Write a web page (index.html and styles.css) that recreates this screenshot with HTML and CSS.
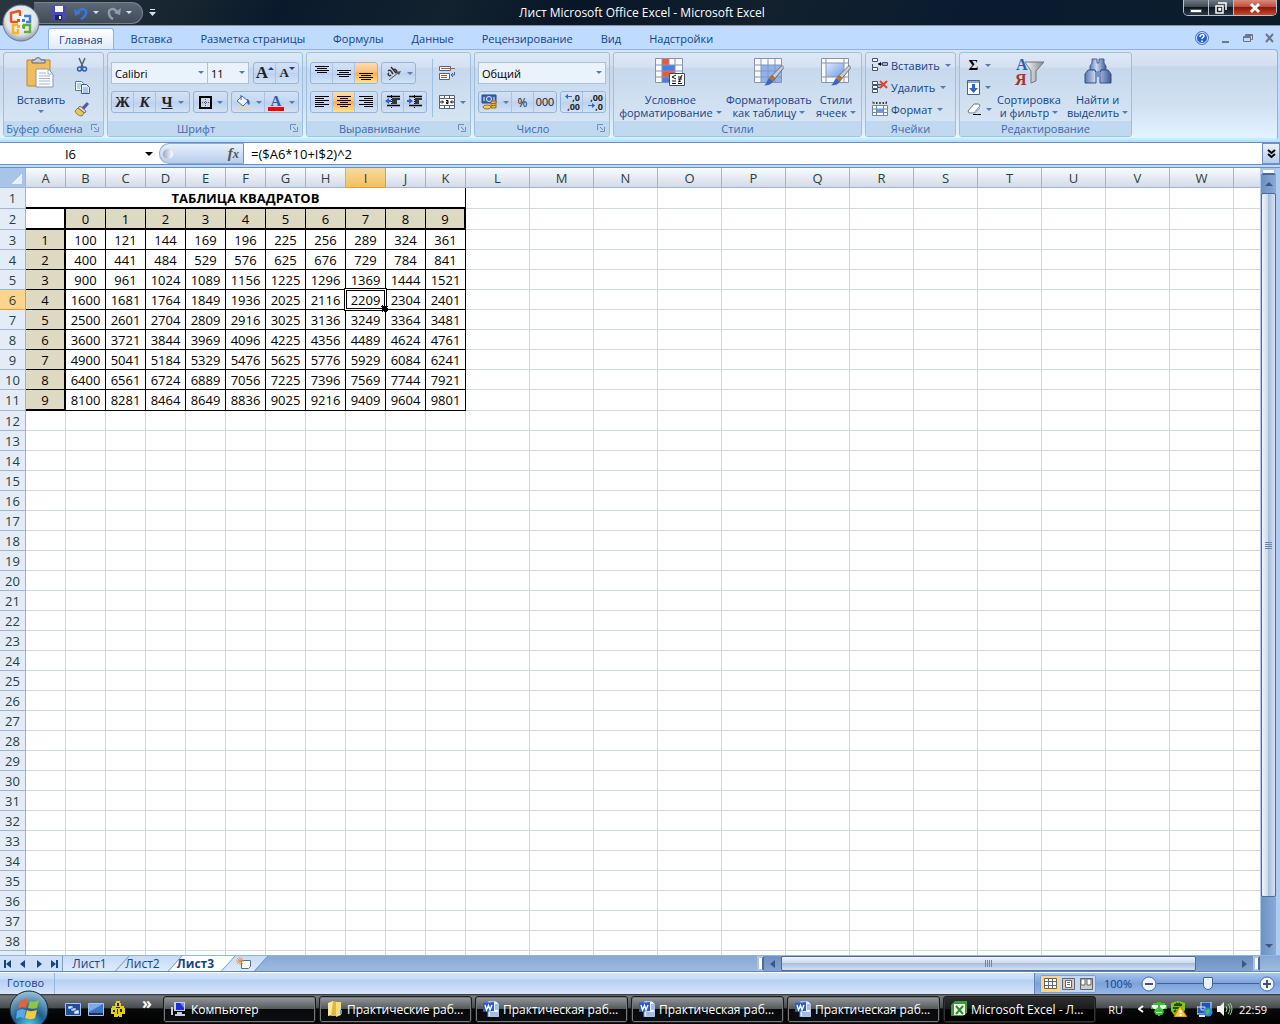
FILE: index.html
```
<!DOCTYPE html>
<html lang="ru">
<head>
  <meta charset="UTF-8">
  <meta name="viewport" content="width=device-width, initial-scale=1.0">
  <title>Лист Microsoft Office Excel - Microsoft Excel</title>
  <link rel="stylesheet" href="styles.css">
</head>
<body>
  <svg class="defs" width="0" height="0" aria-hidden="true">
    <defs>
      <linearGradient id="gBlue" x1="0" y1="0" x2="1" y2="1"><stop offset="0" stop-color="#dfeaff"/><stop offset="1" stop-color="#6e98e8"/></linearGradient>
      <linearGradient id="gGrey" x1="0" y1="0" x2="1" y2="0"><stop offset="0" stop-color="#fafafa"/><stop offset="1" stop-color="#808890"/></linearGradient>
      <linearGradient id="gBin" x1="0" y1="0" x2="1" y2="0"><stop offset="0" stop-color="#5b78ae"/><stop offset=".4" stop-color="#c9d9f4"/><stop offset="1" stop-color="#3c5a94"/></linearGradient>
      <radialGradient id="gOrb" cx=".5" cy=".9" r=".9"><stop offset="0" stop-color="#4fd0f0"/><stop offset=".45" stop-color="#1c5f8e"/><stop offset="1" stop-color="#9ec4d8"/></radialGradient>
      <radialGradient id="gOffice" cx=".5" cy=".4" r=".6"><stop offset="0" stop-color="#ffffff"/><stop offset=".7" stop-color="#dfe3ea"/><stop offset="1" stop-color="#8d98aa"/></radialGradient>
      <symbol id="word" viewBox="0 0 16 16">
        <path d="M5 0h8l3 3v13H5z" fill="#eaf2ff" stroke="#6f93cc"/>
        <path d="M12 4h3M12 6h3M12 8h3M7 12h8M7 14h8" stroke="#5c87cf"/>
        <path d="M0 2l11-1v9L0 11z" fill="#2a5bd0"/>
        <path d="M2 4l1.500 5L5.500 4.500 7 9l2-5" fill="none" stroke="#fff" stroke-width="1.400"/>
      </symbol>
      <symbol id="brush" viewBox="0 0 20 20">
        <path d="M18 0l2 2-9 11-3-3z" fill="#c9ccd3" stroke="#555a66" stroke-width=".8"/>
        <path d="M8 10l3 3-2 3-4-3z" fill="#b9772c" stroke="#7d4d16" stroke-width=".6"/>
        <path d="M5 13l4 3c-2 3-5 4-9 4 2-1 3-5 5-7z" fill="#3769c4"/>
      </symbol>
      <symbol id="launch" viewBox="0 0 8 8">
        <path d="M.5 6V.5H6" fill="none" stroke="#6f8fbb"/><path d="M3 3l3 3M7.500 3v4.500H3" fill="none" stroke="#6f8fbb"/>
      </symbol>
    </defs>
  </svg>

  <header class="titlebar">
    <div class="qat">
      <button class="ico" title="Сохранить"><svg width="14" height="14"><path d="M0 0h14v14H2l-2-2z" fill="#4a48b8"/><path d="M3 0h8v6H3z" fill="#f3f6ff"/><path d="M3 9h7v5H3z" fill="#23226e"/><path d="M7 10h2v3H7z" fill="#fff"/></svg></button>
      <button class="ico undo" title="Отменить"><svg width="14" height="14"><path d="M4 6C7 1 13 3 12 7c0 3-3 5-5 6" fill="none" stroke="#3a76dc" stroke-width="2.500"/><path d="M0 3l1 7 6-3z" fill="#3a76dc"/></svg><i class="tri light"></i></button>
      <button class="ico undo" title="Вернуть"><svg width="14" height="14"><path d="M10 6C7 1 1 3 2 7c0 3 2 5 4 6" fill="none" stroke="#8f9bab" stroke-width="2.500"/><path d="M14 2l-1 7-6-2z" fill="#8f9bab"/></svg><i class="tri light"></i></button>
    </div>
    <button class="qat-more" title="Настройка"><svg width="7" height="7"><path d="M1 .5h5" stroke="#d5e2f2"/><path d="M0 3h7L3.500 7z" fill="#d5e2f2"/></svg></button>
    <h1 class="caption">Лист Microsoft Office Excel - Microsoft Excel</h1>
    <div class="winctl">
      <button title="Свернуть"><svg width="12" height="12"><path d="M.5 7.500h11v3H.5z" fill="#fff" stroke="#555"/></svg></button>
      <button title="Развернуть"><svg width="12" height="12"><path d="M3 1h8v7M1 4h7v7H1zM4 6.500h1.500V8H4z" fill="none" stroke="#fff" stroke-width="1.500"/></svg></button>
      <button class="shut" title="Закрыть"><svg width="12" height="12"><path d="M2 2l8 8M10 2l-8 8" stroke="#fff" stroke-width="3"/></svg></button>
    </div>
  </header>
  <button class="office" title="Office"><svg width="38" height="38" viewBox="0 0 38 38">
    <circle cx="19" cy="19" r="18" fill="url(#gOffice)" stroke="#6f7c92"/>
    <g fill="none" stroke-width="2.500"><path d="M16 18h-6a1 1 0 0 1-1-1V9l8-2a1 1 0 0 1 1 1v4" stroke="#e2571c"/><path d="M22 12h6v6h-4" stroke="#3f7fd6"/><path d="M16 21h-5v8h5v-4" stroke="#f5b61f"/><path d="M22 28h6v-7h-6v4" stroke="#5fae3c"/></g>
    <path d="M15 15h3v3h-3z" fill="#e2571c"/><path d="M20 15h3v3h-3z" fill="#3f7fd6"/><path d="M15 21h3v3h-3z" fill="#f5b61f"/><path d="M20 21h3v3h-3z" fill="#5fae3c"/>
  </svg></button>

  <nav class="tabs">
    <button class="tab active">Главная</button>
    <button class="tab">Вставка</button>
    <button class="tab">Разметка страницы</button>
    <button class="tab">Формулы</button>
    <button class="tab">Данные</button>
    <button class="tab">Рецензирование</button>
    <button class="tab">Вид</button>
    <button class="tab">Надстройки</button>
    <div class="doc-ctl">
      <button title="Справка"><svg width="14" height="14"><circle cx="7" cy="7" r="6.500" fill="#2a5fd0" stroke="#5b7fb8"/><circle cx="7" cy="7" r="5.500" fill="none" stroke="#dbe8ff"/><path d="M5 6c0-3 4-3 4-1 0 1.500-2 1.500-2 3M7 9.500V11" fill="none" stroke="#fff" stroke-width="1.500"/></svg></button>
      <button title="Свернуть окно"><svg width="10" height="10"><path d="M1 8h7v2H1z" fill="#6d7784"/></svg></button>
      <button title="Восстановить окно"><svg width="10" height="10"><path d="M2.500 3V1.500h7v5H8M.5 3.500h7v5h-7zM1 4.500h6M3 2.500h6" fill="none" stroke="#6d7784"/></svg></button>
      <button title="Закрыть окно"><svg width="10" height="10"><path d="M1 1l7 8M8 1L1 9" stroke="#6d7784" stroke-width="2"/></svg></button>
    </div>
  </nav>

  <main class="ribbon">
    <section class="group g-clip">
      <div class="body">
        <button class="big"><svg width="32" height="32"><path d="M2 3h23v26H2z" fill="#f0bd5a" stroke="#b98736"/><path d="M7 6V3h3c0-3 6-3 6 0h4v3z" fill="#c9cdd6" stroke="#5f6675"/><path d="M11 12h12l5 5v13H11z" fill="#fff" stroke="#8797b0"/><path d="M23 12v5h5M14 16h7M14 19h11M14 21.500h11M14 24h11M14 27h11" fill="none" stroke="#9db2d2"/></svg><span>Вставить</span><i class="tri"></i></button>
        <div class="stack">
          <button class="ico" title="Вырезать"><svg width="16" height="16"><path d="M5 1l4 9M11 1L7 10" stroke="#56606e" stroke-width="1.500"/><circle cx="5.500" cy="12" r="2" fill="none" stroke="#2b5fb8" stroke-width="1.500"/><circle cx="10.500" cy="12" r="2" fill="none" stroke="#2b5fb8" stroke-width="1.500"/></svg></button>
          <button class="ico" title="Копировать"><svg width="16" height="16"><path d="M1.500 2.500h6l2 2v7h-8z" fill="#fff" stroke="#4c78c0"/><path d="M3 5h4M3 7h4M3 9h3" stroke="#7aa0e0"/><path d="M7.500 5.500h5l3 3v6h-8z" fill="#e9f1ff" stroke="#2f5ca8"/><path d="M9 9h5M9 11h5M9 13h5" stroke="#6e98e8"/></svg></button>
          <button class="ico" title="Формат по образцу"><svg width="16" height="16"><path d="M13 1l2 2-5 6-3-2z" fill="#5a5aa8"/><path d="M6 5l6 5-1 2-7-5z" fill="#d8dbe2" stroke="#777"/><path d="M4 7l6 5-2 3c-3 0-6-2-7-5z" fill="#e8c95c" stroke="#9a7d24"/></svg></button>
        </div>
      </div>
      <h2>Буфер обмена<svg class="launch" width="8" height="8"><use href="#launch"/></svg></h2>
    </section>

    <section class="group g-font">
      <div class="body rows">
        <div class="row">
          <label class="combo w-font"><select aria-label="Шрифт"><option>Calibri</option></select></label>
          <label class="combo w-size"><select aria-label="Размер шрифта"><option>11</option></select></label>
          <div class="bar first"><button class="serif grow" title="Увеличить размер">A<i class="tri up"></i></button><button class="serif shrink" title="Уменьшить размер">A<i class="tri"></i></button></div>
        </div>
        <div class="row">
          <div class="bar"><button class="serif">Ж</button><button class="serif it">К</button><button class="serif wide"><u>Ч</u><i class="tri"></i></button></div>
          <div class="bar"><button class="wide" title="Границы"><svg width="13" height="13"><path d="M1 1h11v11H1z" fill="none" stroke="#000" stroke-width="2"/><path d="M6.500 3v8M3 6.500h8" stroke="#555" stroke-dasharray="1 1"/></svg><i class="tri"></i></button></div>
          <div class="bar"><button class="wide" title="Цвет заливки"><svg width="16" height="16"><path d="M7 2l6 5-5 5-6-5z" fill="#eef4ff" stroke="#4c6a9c"/><path d="M6 6V1" stroke="#4c6a9c"/><path d="M12 5c3 1 3 4 2 6-2-1-2-3-2-6z" fill="#2b5fc0"/><path d="M0 13h16v3H0z" fill="#ddd9c3"/></svg><i class="tri"></i></button><button class="wide" title="Цвет текста"><span class="acolor serif">A</span><i class="tri"></i></button></div>
        </div>
      </div>
      <h2>Шрифт<svg class="launch" width="8" height="8"><use href="#launch"/></svg></h2>
    </section>

    <section class="group g-align">
      <div class="body">
        <div class="rows">
          <div class="row">
            <div class="bar"><button title="По верхнему краю"><svg width="14" height="14"><path d="M0 .5h14M2 2.500h10M0 4.500h14M2 6.500h10" stroke="#000"/></svg></button><button title="По середине"><svg width="14" height="14"><path d="M0 4.500h14M2 6.500h10M0 8.500h14M2 10.500h10" stroke="#000"/></svg></button><button class="on" title="По нижнему краю"><svg width="14" height="14"><path d="M0 7.500h14M2 9.500h10M0 11.500h14M2 13.500h10" stroke="#000"/></svg></button></div>
            <div class="bar"><button class="wide" title="Ориентация"><svg width="17" height="14"><path d="M3 5c2-2 3 0 5 3M4 7c-2 1 0 4 2 2M6 1l5 6M8 4c2-2 5 1 3 3" fill="none" stroke="#333" stroke-width="1.500"/><path d="M4 14l9-7" stroke="#555"/><path d="M16 5l-5 1 3 3z" fill="#555"/></svg><i class="tri"></i></button></div>
          </div>
          <div class="row">
            <div class="bar"><button title="По левому краю"><svg width="14" height="12"><path d="M0 .5h14M0 2.500h9M0 4.500h14M0 6.500h9M0 8.500h14M0 10.500h9" stroke="#000"/></svg></button><button class="on" title="По центру"><svg width="14" height="12"><path d="M0 .5h14M3 2.500h8M0 4.500h14M3 6.500h8M0 8.500h14M3 10.500h8" stroke="#000"/></svg></button><button title="По правому краю"><svg width="14" height="12"><path d="M0 .5h14M5 2.500h9M0 4.500h14M5 6.500h9M0 8.500h14M5 10.500h9" stroke="#000"/></svg></button></div>
            <div class="bar"><button title="Уменьшить отступ"><svg width="16" height="14"><path d="M2 1.500h13M7 4h8M7 6h5M7 8h5M2 10.500h13" stroke="#000" stroke-width="1.500"/><path d="M6.500 0v14" stroke="#000" stroke-dasharray="1 1"/><path d="M0 6l4-3v2h2v2H4v2z" fill="#2b63d0"/></svg></button><button title="Увеличить отступ"><svg width="16" height="14"><path d="M2 1.500h13M8 4h7M8 6h4M8 8h4M2 10.500h13" stroke="#000" stroke-width="1.500"/><path d="M7.500 0v14" stroke="#000" stroke-dasharray="1 1"/><path d="M6 6L2 3v2H0v2h2v2z" fill="#2b63d0"/></svg></button></div>
          </div>
        </div>
        <div class="rows split">
          <div class="row"><button class="ico" title="Перенос текста"><svg width="16" height="16"><path d="M.5 1.500h11v4H.5zM.5 8.500h10v6H.5z" fill="#fff" stroke="#56657d"/><path d="M2 3.500h14M2 10.500h6M2 12.500h6" stroke="#b0602c"/><path d="M15.500 7v3h-3M14 8l-2 2 2 2" fill="none" stroke="#44618f"/></svg></button></div>
          <div class="row"><button class="ico" title="Объединить"><svg width="16" height="14"><path d="M.5.5h15v13H.5zM.5 3.500h15M.5 10.500h15M5.500 0v3M10.500 0v3M5.500 11v3M10.500 11v3" fill="#fff" stroke="#56657d"/><path d="M1 7h3M15 7h-3M3 5.500L4.500 7 3 8.500M13 5.500L11.500 7 13 8.500M7 5.500h2v3H7.500v-1.500H9" fill="none" stroke="#000"/></svg><i class="tri"></i></button></div>
        </div>
      </div>
      <h2>Выравнивание<svg class="launch" width="8" height="8"><use href="#launch"/></svg></h2>
    </section>

    <section class="group g-num">
      <div class="body rows">
        <div class="row"><label class="combo fill"><select aria-label="Числовой формат"><option>Общий</option></select></label></div>
        <div class="row">
          <div class="bar"><button class="wide" title="Финансовый формат"><svg width="17" height="16"><path d="M1 1h14v8H1z" fill="#3c62b4" stroke="#24468c"/><circle cx="8" cy="5" r="2.500" fill="none" stroke="#dbe7ff"/><path d="M3 3v4M13 3v4" stroke="#dbe7ff"/><path d="M10 7h5v7h-5z" fill="#e8b73a" stroke="#9c6f14"/><path d="M10 9.500h5M10 11.500h5" stroke="#9c6f14"/><ellipse cx="6" cy="13" rx="4" ry="2" fill="#f2cf60" stroke="#9c6f14"/></svg><i class="tri"></i></button><button class="num">%</button><button class="num narrow">000</button></div>
          <div class="bar"><button class="dec" title="Увеличить разрядность"><svg width="7" height="5"><path d="M0 2.500L3 0v2h4v1H3v2z" fill="#2b63d0"/></svg>,0<br>,00</button><button class="dec" title="Уменьшить разрядность">,00<br><svg width="7" height="5"><path d="M7 2.500L4 0v2H0v1h4v2z" fill="#2b63d0"/></svg>,0</button></div>
        </div>
      </div>
      <h2>Число<svg class="launch" width="8" height="8"><use href="#launch"/></svg></h2>
    </section>

    <section class="group g-styles">
      <div class="body">
        <button class="big"><svg width="32" height="32"><path d="M1.500 1.500h27v24h-27z" fill="#f8fafe" stroke="#8795ab"/><path d="M8 2h7v6H8zM8 14h13v6H8z" fill="#f0563c"/><path d="M8 8h13v6H8zM8 20h7v5H8z" fill="#4a7fe0"/><path d="M8 2v23M15 2v6M21 2v23M2 8h26M2 14h26M2 20h26" fill="none" stroke="#8795ab"/><path d="M15.500 16.500h15v12h-15z" fill="#fff" stroke="#3f4d63"/><path d="M22 18l-4 2 4 2M18 24h4M24 20h4M24 22h4M28 18l-3 6M24 25l3-1M18 26.500h4M24 26.500h4" fill="none" stroke="#111"/></svg><span>Условное</span><span>форматирование<i class="tri"></i></span></button>
        <button class="big"><svg width="32" height="32"><path d="M1.500 1.500h27v24h-27z" fill="#f8fafe" stroke="#8795ab"/><path d="M8 8h20v17H8z" fill="#8fb2f5"/><path d="M8 2v23M15 2v23M22 2v23M2 8h26M2 14h26M2 20h26" fill="none" stroke="#8795ab"/><use href="#brush" x="11" y="8" width="20" height="21"/></svg><span>Форматировать</span><span>как таблицу<i class="tri"></i></span></button>
        <button class="big"><svg width="32" height="32"><path d="M1.500 1.500h27v24h-27z" fill="#f8fafe" stroke="#8795ab"/><path d="M6 6h18v14H6z" fill="url(#gBlue)"/><path d="M6 2v23M24 2v23M2 6h26M2 20h26" fill="none" stroke="#8795ab"/><use href="#brush" x="11" y="8" width="20" height="21"/></svg><span>Стили</span><span>ячеек<i class="tri"></i></span></button>
      </div>
      <h2>Стили</h2>
    </section>

    <section class="group g-cells">
      <div class="body stack">
        <button class="small"><svg width="16" height="16"><path d="M.5 1.500h5v3h-5zM.5 10.500h5v3h-5zM.5 7v3.500" fill="#fff" stroke="#44546c"/><path d="M10.500 5.500h5v3h-5z" fill="#8fb2f5" stroke="#44546c"/><path d="M6 7h4" stroke="#000"/><path d="M9 5v4L6 7z" fill="#000"/></svg>Вставить<i class="tri"></i></button>
        <button class="small"><svg width="16" height="16"><path d="M.5 2.500h5v3h-5zM.5 6.500h5v3h-5zM.5 10.500h5v3h-5z" fill="#fff" stroke="#44546c"/><path d="M5.500 5.500h4v3h-4z" fill="#8fb2f5" stroke="#44546c"/><path d="M8 2l7 7M15 2L8 9" stroke="#e8402c" stroke-width="2"/></svg>Удалить<i class="tri"></i></button>
        <button class="small"><svg width="16" height="16"><path d="M1 .5v3M14.500.5v3M1 2h14M4.500 1v2M8 1v2M11.500 1v2" stroke="#333" stroke-dasharray="2 1"/><path d="M.5 4.500h15v10H.5zM4.500 4v11M11.500 4v11M.5 8h15M.5 11.500h15" fill="#fff" stroke="#7385a0"/><path d="M5 8h6v4H5z" fill="#6e98e8"/></svg>Формат<i class="tri"></i></button>
      </div>
      <h2>Ячейки</h2>
    </section>

    <section class="group g-edit">
      <div class="body">
        <div class="stack">
          <button class="ico" title="Сумма"><span class="sigma">Σ</span><i class="tri"></i></button>
          <button class="ico" title="Заполнить"><svg width="13" height="15"><path d="M.5.5h12v14H.5z" fill="#fff" stroke="#44618f"/><path d="M1 1h11v2H1z" fill="#8fa9d4"/><path d="M5 4h3v4h3l-4.500 5L2 8h3z" fill="#2b63d0"/></svg><i class="tri"></i></button>
          <button class="ico" title="Очистить"><svg width="14" height="14"><path d="M1 9l6-7h5l1 2-6 7H2z" fill="#fff" stroke="#66758c"/><path d="M7 11l6-7v3l-5 5H2l-1-3 1 2z" fill="#aebbd0"/><path d="M6 12.500h8" stroke="#000"/></svg><i class="tri"></i></button>
        </div>
        <button class="big"><svg width="32" height="32"><path d="M12 5h19L23 14v10l-5 2V14z" fill="url(#gGrey)" stroke="#70767e"/><text x="3" y="13" class="ltr-a">А</text><text x="2" y="28" class="ltr-z">Я</text></svg><span>Сортировка</span><span>и фильтр<i class="tri"></i></span></button>
        <button class="big"><svg width="32" height="32"><path d="M10 2h5v4h2V2h5v4l2 3v4h-5v2h-6v-2H8V9l2-3z" fill="url(#gBin)" stroke="#46608f"/><path d="M6 13h7l1 4v9H3v-9zM19 13h7l3 4v9H18v-9z" fill="url(#gBin)" stroke="#35507f"/><path d="M13 15h6v5h-6z" fill="#7390c2"/></svg><span>Найти и</span><span>выделить<i class="tri"></i></span></button>
      </div>
      <h2>Редактирование</h2>
    </section>
  </main>

  <div class="formula-bar">
    <label class="namebox"><input type="text" value="I6" aria-label="Имя ячейки"><i class="tri black"></i></label>
    <div class="fx"><span class="dot"></span><button title="Вставить функцию"><i>f</i><small>x</small></button></div>
    <input class="formula" type="text" value="=($A6*10+I$2)^2" aria-label="Строка формул">
    <button class="expand" title="Развернуть"><svg width="9" height="10"><path d="M1 1l3.500 3L8 1M1 5l3.500 3L8 5" fill="none" stroke="#000" stroke-width="2"/></svg></button>
  </div>

  <div class="sheet">
    <div class="cells">
      <table id="grid"></table>
    </div>
    <div class="vscroll">
      <span class="splitter"></span>
      <button title="Вверх"><i class="tri up"></i></button>
      <span class="thumb"></span>
      <span class="track"></span>
      <button title="Вниз"><i class="tri"></i></button>
    </div>
  </div>

  <div class="sheetbar">
    <div class="sheet-nav">
      <button title="Первый"><svg width="8" height="8"><path d="M1 0v8" stroke="#15428b" stroke-width="2"/><path d="M7 0v8L2 4z" fill="#15428b"/></svg></button>
      <button title="Назад"><svg width="8" height="8"><path d="M6 0v8L1 4z" fill="#15428b"/></svg></button>
      <button title="Вперёд"><svg width="8" height="8"><path d="M2 0v8l5-4z" fill="#15428b"/></svg></button>
      <button title="Последний"><svg width="8" height="8"><path d="M7 0v8" stroke="#15428b" stroke-width="2"/><path d="M1 0v8l5-4z" fill="#15428b"/></svg></button>
    </div>
    <div class="sheet-tabs">
      <button>Лист1</button>
      <button>Лист2</button>
      <button class="current">Лист3</button>
      <button class="new" title="Вставить лист"><svg width="16" height="13"><path d="M5.500 3.500h9v6l-2 2h-7z" fill="#fff" stroke="#5a6f92"/><path d="M4 0v8M0 4h8M1 1l6 6M7 1L1 7" stroke="#e39a2c"/></svg></button>
    </div>
    <div class="hscroll">
      <span class="splitter"></span>
      <button title="Влево"><svg width="5" height="8"><path d="M5 0v8L0 4z" fill="#3f5680"/></svg></button>
      <span class="thumb"></span>
      <span class="track"></span>
      <button title="Вправо"><svg width="5" height="8"><path d="M0 0v8l5-4z" fill="#3f5680"/></svg></button>
      <span class="splitter"></span>
    </div>
  </div>

  <div class="status">
    <span class="ready">Готово</span>
    <div class="zoom">
      <div class="views">
        <button class="on" title="Обычный"><svg width="13" height="11"><path d="M.5.5h12v10H.5zM4.500 0v11M8.500 0v11M0 3.500h13M0 7.500h13" fill="#fff" stroke="#666"/></svg></button>
        <button title="Разметка страницы"><svg width="13" height="12"><path d="M.5.5h12v11H.5z" fill="#ccc" stroke="#666"/><path d="M3.500 2.500h6v7h-6zM5 4.500h3M5 6.500h3" fill="#fff" stroke="#666"/></svg></button>
        <button title="Страничный"><svg width="13" height="12"><path d="M.5.5h12v11H.5z" fill="#ccc" stroke="#666"/><path d="M1 1h4v6H1zM7 1h4v6H7z" fill="#fff" stroke="#666"/></svg></button>
      </div>
      <label for="zoom">100%</label>
      <button title="Уменьшить"><svg width="16" height="16"><circle cx="8" cy="8" r="7" fill="#eef4fd" stroke="#4c6a9c"/><path d="M4 8h8" stroke="#44546c" stroke-width="2"/></svg></button>
      <input type="range" id="zoom" min="0" max="200" value="100">
      <button title="Увеличить"><svg width="16" height="16"><circle cx="8" cy="8" r="7" fill="#eef4fd" stroke="#4c6a9c"/><path d="M4 8h8M8 4v8" stroke="#44546c" stroke-width="2"/></svg></button>
    </div>
  </div>

  <footer class="taskbar">
    <div class="quick">
      <button title="Переключение окон"><svg width="16" height="13"><path d="M.5.500h15v12H.5z" fill="#1c4f9c" stroke="#a8c4ea"/><path d="M3 3h5v3H3zM6 5h5v3H6zM9 7h5v4H9z" fill="#e9f3ff" stroke="#1c4f9c" stroke-width=".6"/></svg></button>
      <button title="Рабочий стол"><svg width="16" height="13"><path d="M.5.500h15v12H.5z" fill="#3a74c8" stroke="#a8c4ea"/><path d="M1 1h14L1 9z" fill="#7caae8"/><path d="M1 10h14v2H1z" fill="#1d2c4a"/></svg></button>
      <button title="QIP"><svg width="14" height="16"><path d="M5 0h4v2h1v3h3v2h1v6h-3v3H8v-1H7v1H3v-3H0V7h1V5h3V2h1z" fill="#e2cd1e"/><path d="M6 2h2v3H6zM2 9h2v2H2zM6 8h1v5H6zM9 8h2v3H9zM5 6h4v1H5z" fill="#222"/></svg></button>
      <span class="chev">»</span>
    </div>
    <div class="tasks">
      <button><svg width="16" height="14"><path d="M3 0h11v9H3z" fill="#c9d0d8"/><path d="M5 1h8v7H5z" fill="#1a2ed8"/><path d="M9 1h4v5z" fill="#6f8cff"/><path d="M6 10h5v2H6zM0 5h2v8H0zM4 12h10v2H4z" fill="#c9d0d8"/></svg><span>Компьютер</span></button>
      <button><svg width="16" height="16"><path d="M1 2l5-2v14l-5 1z" fill="#fbe9a0"/><path d="M6 0l5 1v14H4z" fill="#dfb840"/><path d="M9 1h5v13l-5 2z" fill="#f6dc7c"/><path d="M13 9h2v4h-2z" fill="#4aa0e0"/></svg><span>Практические раб...</span></button>
      <button><svg width="16" height="16"><use href="#word"/></svg><span>Практическая раб...</span></button>
      <button><svg width="16" height="16"><use href="#word"/></svg><span>Практическая раб...</span></button>
      <button><svg width="16" height="16"><use href="#word"/></svg><span>Практическая раб...</span></button>
      <button class="pressed"><svg width="16" height="16"><path d="M4 0h12v12l-4 3H0V4z" fill="#3c9a3a"/><path d="M3 3h11v11H3z" fill="#eef8ec"/><path d="M5 5l7 8M12 5l-7 8" stroke="#2f8a2c" stroke-width="2"/></svg><span>Microsoft Excel - Л...</span></button>
    </div>
    <div class="tray">
      <span class="lang">RU</span>
      <button class="hidden-icons" title="Показать значки"><svg width="6" height="8"><path d="M5 1L1 4l4 3" fill="none" stroke="#fff" stroke-width="2"/></svg></button>
      <svg width="16" height="14"><path d="M2 1h4V0h4v1h4v2h2v4h-4l1 3-2 3H9v1H7v-1H5l-2-3 1-3H0V3h2z" fill="#35c22e"/><path d="M1 3h6v2l-2 2H3L1 5zM9 3h6v2l-2 2h-2L9 5z" fill="#f4fff0"/><path d="M5 10h6v1H5z" fill="#d8ffd0"/></svg>
      <svg width="16" height="16"><path d="M0 2l7-2 7 2v7l-4 6H4L0 10z" fill="#7bc81c"/><path d="M3 4h8M2 7h7M5 2l2 2 2-2M3 11l2-2" fill="none" stroke="#1f4a10" stroke-width="2"/><path d="M9 5l7 11H3z" fill="#ffc52e" stroke="#c47c00"/><path d="M9.500 9v3M9.500 13v2" stroke="#fff" stroke-width="2"/></svg>
      <svg class="net" width="16" height="15"><path d="M4 0h10v8H4zM0 5h8v7H0z" fill="#1d56b8" stroke="#dbe7f8"/><path d="M2 14h6" stroke="#dbe7f8" stroke-width="2"/><circle cx="11" cy="10" r="4.500" fill="#2f86e8"/><path d="M8 8l4-1 1 3-3 3z" fill="#4cc43c"/></svg>
      <svg width="16" height="14"><path d="M0 4h3l4-4v14l-4-4H0z" fill="#f2f2f2"/><path d="M9 4q2 3 0 6M11 2q4 5 0 10M13 1q4 6 0 12" fill="none" stroke="#8ad88a"/></svg>
      <time>22:59</time>
    </div>
  </footer>
  <button class="start" title="Пуск"><svg width="42" height="34" viewBox="0 0 42 34">
    <circle cx="21" cy="20" r="19" fill="url(#gOrb)" stroke="#0d2433"/>
    <path d="M12 11c3-2 5-2 8-1l-2 8c-3-1-5-1-8 1z" fill="#e8603a"/><path d="M22 11c3 1 5 1 9-1l-2 8c-3 1-6 1-9 0z" fill="#8ec640"/><path d="M9 21c3-2 6-2 9-1l-2 8c-3-1-5-1-8 1z" fill="#58a8ec"/><path d="M19 20c3 2 6 1 10 0l-2 8c-4 2-7 1-10 0z" fill="#fcc838"/>
  </svg></button>

  <script>
    const table = document.getElementById("grid");
    const letters = "ABCDEFGHIJKLMNOPQRSTUVWX".split("");
    const ROWS = 39;
    const selected = { row: 6, col: "I" };

    // column letters
    let html = "<colgroup><col class='c-head'>";
    letters.forEach((l, i) => html += `<col class="${i < 11 ? "c-narrow" : "c-wide"}">`);
    html += "</colgroup><tr class='heads'><th class='corner'></th>";
    letters.forEach((l, i) => {
      html += `<th class="${l === selected.col ? "hl" : ""}">${i < 23 ? l : ""}</th>`;
    });
    html += "</tr>";

    function cell(r, c) {
      if (r === 2) {
        if (c === 0) return "<td class='empty'></td>";
        if (c <= 10) return `<td class="digit top">${c - 1}</td>`;
      }
      if (r >= 3 && r <= 11) {
        const tens = r - 2;
        if (c === 0) return `<td class="digit left">${tens}</td>`;
        if (c <= 10) {
          const sel = r === selected.row && letters[c] === selected.col;
          return `<td class="val">${(tens * 10 + c - 1) ** 2}${sel ? "<span class='cursor'></span>" : ""}</td>`;
        }
      }
      return "<td></td>";
    }

    for (let r = 1; r <= ROWS; r++) {
      const tall = r < 3 || r === 11;
      html += `<tr class="${tall ? "tall" : ""}${r === 11 ? " last" : ""}"><th class="${r === selected.row ? "hl" : ""}">${r < ROWS ? r : ""}</th>`;
      let from = 0;
      if (r === 1) {
        html += "<td class='heading' colspan='11'>ТАБЛИЦА КВАДРАТОВ</td>";
        from = 11;
      }
      for (let c = from; c < letters.length; c++) html += cell(r, c);
      html += "</tr>";
    }
    table.innerHTML = html;
  </script>
</body>
</html>
```
FILE: styles.css
```
* { box-sizing: border-box; }
body {
  margin: 0;
  height: 100vh;
  display: flex;
  flex-direction: column;
  overflow: hidden;
  font-family: "Open Sans", "Noto Sans", sans-serif;
  font-size: 11px;
  color: #15428b;
  background: #bfdbff;
}
button {
  margin: 0;
  padding: 0;
  border: 0;
  background: none;
  font: inherit;
  color: inherit;
  display: flex;
  align-items: center;
  justify-content: center;
}
input, select { font: inherit; margin: 0; padding: 0; border: 0; outline: 0; }
h1, h2 { margin: 0; font-size: 11px; font-weight: normal; }
svg { display: block; flex: none; }
.defs { position: absolute; }

.tri {
  flex: none;
  display: inline-block;
  border: 3px solid transparent;
  border-top-color: #567db1;
  border-bottom: 0;
}
.tri.up { border-top: 0; border-bottom: 3px solid #15428b; }
.tri.light { border-top-color: #d5e2f2; }
.tri.black { border-width: 4px 4px 0; border-top-color: #000; }

/* title bar */
.titlebar {
  flex: none;
  height: 26px;
  display: flex;
  align-items: center;
  background: linear-gradient(115deg, #2a3640 0%, #16242f 15%, #0a1a2c 22%, #12222e 35%, #081628 45%, #12212d 60%, #0a1b30 75%, #0b1c2b 100%);
  border-bottom: 1px solid #8a9198;
}
.qat {
  height: 22px;
  margin-left: 34px;
  padding-left: 18px;
  width: 109px;
  display: flex;
  align-items: center;
  gap: 8px;
  border: 1px solid #77828f;
  border-left: 0;
  border-radius: 0 11px 11px 0;
  background: linear-gradient(#5d6875, #3f4b59);
}
.undo { gap: 4px; }
.qat-more { width: 18px; height: 20px; }
.caption { flex: 1; text-align: center; font-size: 12px; color: #fff; padding-right: 60px; }
.winctl {
  display: flex;
  align-self: flex-start;
  margin-right: 3px;
  border: 1px solid #b9c2cc;
  border-top: 0;
  border-radius: 0 0 5px 5px;
  overflow: hidden;
}
.winctl button { width: 25px; height: 15px; background: linear-gradient(#6f7a85, #3a444e 50%, #0c1620 50%, #2a3846); border-right: 1px solid #b9c2cc; }
.winctl .shut { width: 42px; border: 0; background: linear-gradient(#d88a7c, #b8483a 50%, #8c1808 50%, #c84a28); }
.office { position: absolute; left: 2px; top: 4px; }

/* ribbon tabs */
.tabs { flex: none; height: 23px; display: flex; padding-left: 45px; }
.tab { margin: 2px 3px 0; padding: 0 11px; height: 21px; }
.tab.active {
  border: 1px solid #8db2e3;
  border-bottom: 0;
  padding: 0 10px;
  border-radius: 3px 3px 0 0;
  background: linear-gradient(#fff, #dfebf8);
}
.doc-ctl { margin-left: auto; display: flex; align-items: center; gap: 12px; padding-right: 5px; }

/* ribbon */
.ribbon {
  flex: none;
  height: 91px;
  margin-right: 2px;
  padding: 2px 3px;
  display: flex;
  gap: 3px;
  border: 1px solid #8db2e3;
  border-left: 0;
  border-bottom: 2px solid #b8f2fb;
  border-radius: 0 4px 4px 0;
  background: linear-gradient(#dbe6f4 0, #d3dfef 18%, #c6d6ec 19%, #d0dff0 60%, #e3f3ff 100%);
}
.group {
  flex: none;
  height: 85px;
  display: flex;
  flex-direction: column;
  border: 1px solid #9dbfe0;
  border-radius: 3px;
  background: linear-gradient(#dde8f5 0, #d5e1f2 17%, #c7d8ed 18%, #d9e8f5 100%);
  overflow: hidden;
}
.group h2 {
  height: 15px;
  line-height: 15px;
  text-align: center;
  white-space: nowrap;
  color: #3e6aaa;
  background: #c1d8f1;
  position: relative;
}
.g-clip h2, .g-font h2, .g-align h2, .g-num h2 { padding-right: 18px; }
.launch { position: absolute; right: 4px; top: 3px; }
.body { flex: 1; display: flex; }
.g-clip { width: 101px; }
.g-font { width: 196px; }
.g-align { width: 165px; }
.g-num { width: 136px; }
.g-styles { width: 249px; }
.g-cells { width: 91px; }
.g-edit { width: 173px; }
.rows { display: flex; flex-direction: column; gap: 7px; padding: 9px 3px 0; }
.row { display: flex; gap: 3px; height: 22px; }
.stack { display: flex; flex-direction: column; padding-top: 1px; }
.stack button { height: 22px; }
.g-clip .big { width: 66px; margin-left: 4px; }
.ico { gap: 5px; }
.big { flex-direction: column; justify-content: flex-start; line-height: 13px; padding-top: 4px; white-space: nowrap; }
.big svg { margin-bottom: 4px; }
.big .tri { margin-left: 3px; vertical-align: 3px; }
.big > .tri { margin: 4px 0 0; }
.g-styles .body { justify-content: space-around; padding: 0 3px; }
.small { gap: 3px; padding-left: 6px; justify-content: flex-start; }
.small .tri { margin-left: 2px; }
.g-edit .body { gap: 6px; }
.g-edit .stack { width: 31px; padding-left: 7px; }
.g-edit .stack button { justify-content: flex-start; }
.g-edit .big { min-width: 58px; }
.sigma { font: bold 15px "Liberation Serif", serif; color: #000; width: 13px; }
.ltr-a { font: bold 16px "Liberation Serif", serif; fill: #2f5cae; }
.ltr-z { font: bold 16px "Liberation Serif", serif; fill: #a8332c; }

.bar { display: flex; border: 1px solid #96b4dc; border-radius: 3px; background: linear-gradient(#d3e1f4, #c5d7f0 48%, #bbd1ee 50%, #d2e2f6); overflow: hidden; }
.bar.first { margin-left: 1px; }
.bar button { width: 22px; border-right: 1px solid #abc4e4; }
.bar button:last-child { border-right: 0; }
.bar .wide { width: 33px; gap: 5px; }
.bar .on { background: linear-gradient(#fbdcae, #fdc077 45%, #fdab48 50%, #fde48c); }
.bar .serif, .serif { font-family: "Liberation Serif", serif; font-weight: bold; font-size: 15px; color: #222; }
.bar .it { font-style: italic; }
.bar .grow { font-size: 17px; }
.bar .shrink { font-size: 13px; }
.grow .tri, .shrink .tri { align-self: flex-start; margin-top: 4px; }
.shrink .tri { border-top-color: #15428b; }
.acolor { line-height: 14px; height: 17px; width: 16px; border-bottom: 4px solid #f00; text-align: center; }
.bar .acolor { color: #2f5cae; }
.bar .num { color: #222; font-size: 12px; }
.bar .narrow { font-family: "Liberation Sans", sans-serif; font-size: 11px; }
.bar .dec { display: block; font-size: 9px; line-height: 9px; color: #222; font-weight: bold; text-align: right; padding-right: 2px; }
.dec svg { display: inline-block; vertical-align: 2px; }

.combo { position: relative; display: block; background: #eaf2fb; border: 1px solid #abc1de; }
.combo select { appearance: none; background: none; width: 100%; height: 20px; padding-left: 3px; color: #000; display: block; }
.combo::after { content: ""; position: absolute; right: 3px; top: 8px; border: 3px solid transparent; border-top-color: #567db1; border-bottom: 0; }
.w-font { width: 98px; }
.w-size { width: 43px; margin-left: -4px; }
.fill { flex: 1; }
.split { border-left: 1px solid #9dbfe0; margin: 6px 0 4px 2px; padding: 3px 0 0 6px; }

/* formula bar */
.formula-bar { flex: none; display: flex; margin-top: 2px; height: 23px; border-top: 1px solid #6a8fc0; border-bottom: 1px solid #6a8fc0; background: #fff; }
.namebox { width: 159px; display: flex; align-items: center; }
.namebox input { width: 141px; text-align: center; font-size: 13px; }
.namebox .tri { margin-left: 4px; }
.fx { width: 85px; display: flex; align-items: center; justify-content: space-between; padding: 0 4px 0 3px; border: 1px solid #8fadd4; border-right-color: #6a8fc0; border-radius: 10px 0 0 10px; background: linear-gradient(#e8f1fc, #b7cdec); }
.dot { width: 10px; height: 10px; border-radius: 50%; background: linear-gradient(90deg, #9aa8bc, #fff); }
.fx button { font: italic bold 15px "Liberation Serif", serif; color: #555; align-items: baseline; }
.formula { flex: 1; font-size: 13px; padding-left: 7px; }
.expand { width: 18px; border: 1px solid #6a8fc0; background: linear-gradient(#e8f1fc, #b7cdec); }

/* cells */
.sheet { flex: 1; min-height: 0; display: flex; margin-top: 2px; border-top: 1px solid #6a8fc0; background: #b0cbf0; }
.cells { flex: 1; min-width: 0; overflow: hidden; background: #fff; }
#grid { width: 0; table-layout: fixed; border-collapse: separate; border-spacing: 0; font-size: 13px; line-height: 18px; color: #000; }
.c-head { width: 26px; }
.c-narrow { width: 40px; }
.c-wide { width: 64px; }
#grid tr { height: 20px; }
#grid tr.tall { height: 21px; }
#grid td, #grid th { padding: 0; text-align: center; white-space: nowrap; border: solid #d0d7e5; border-width: 0 1px 1px 0; }
#grid th { font-weight: normal; color: #27413e; background: #e4ecf7; border-color: #9eb6ce; }
#grid .heads th { background: linear-gradient(#f9fcfd, #d3dbe9); }
#grid .heads .corner { background: linear-gradient(135deg, transparent 55%, #e9f0fa 55%) 10px 4px / 12px 12px no-repeat, #a9c4e9; }
#grid th.hl { background: #ffd58d; border-color: #f29536; }
#grid .heads th.hl { background: linear-gradient(#f9d99f, #f1c15f); }
#grid .heading { font-weight: bold; border-color: #000; border-bottom-width: 2px; }
#grid .empty { border: solid #000; border-width: 0 2px 2px 0; }
#grid .digit { background: #ddd9c3; border-color: #000; }
#grid .top { border-bottom-width: 2px; }
#grid .top:nth-child(12) { border-right-width: 2px; }
#grid .left { border-right-width: 2px; }
#grid .last .left { border-bottom-width: 2px; }
#grid .val { border-color: #000; position: relative; }
.cursor { position: absolute; inset: 0; border: 1px solid #000; box-shadow: 0 0 0 1px #fff, 0 0 0 2px #000; }
.cursor::after { content: ""; position: absolute; right: -4px; bottom: -4px; width: 5px; height: 5px; background: #000; border: 1px dotted #fff; }

.vscroll { flex: none; width: 15px; margin: 0 4px 0 1px; display: flex; flex-direction: column; background: linear-gradient(90deg, #6d90c2, #8aaad6); }
.vscroll .splitter { height: 7px; background: #fff; border: 2px solid #a8c4ea; border-bottom-color: #4c6a9c; }
.vscroll button { height: 18px; }
.vscroll .tri { border-width: 4px 4px 0; border-top-color: #3f5680; }
.vscroll .tri.up { border-width: 0 4px 4px; border-bottom-color: #3f5680; }
.vscroll .thumb { flex: 706; border: 1px solid #4c6a9c; border-radius: 2px; background: repeating-linear-gradient(#6d85ad 0 1px, transparent 1px 2px) center / 7px 7px no-repeat, linear-gradient(90deg, #f0f5fb, #c9d6ea 50%, #a9bedd 50%, #d5e2f3); }
.vscroll .track { flex: 40; }

/* sheet tabs */
.sheetbar { flex: none; height: 17px; display: flex; font-size: 12px; border-top: 1px solid #8fb4e6; border-bottom: 1px solid #5f87bb; background: linear-gradient(#89a8d4, #9fbadf); }
.sheet-nav { width: 63px; display: flex; background: #cfe0f6; border-right: 1px solid #7d9fcb; }
.sheet-nav button { flex: 1; }
.sheet-tabs { display: flex; flex: 694; overflow: hidden; }
.sheet-tabs button { position: relative; width: 53px; z-index: 2; }
.sheet-tabs button:first-child { z-index: 3; }
.sheet-tabs button::before {
  content: "";
  position: absolute;
  inset: 0 0 0 -16px;
  z-index: -1;
  transform: skewX(-42deg);
  transform-origin: bottom;
  border-right: 1px solid #6f93c4;
  background: linear-gradient(#c6dbf5, #dfebfa);
}
.sheet-tabs .current { z-index: 4; font-weight: bold; }
.sheet-tabs .current::before { background: #fff; left: 0; }
.sheet-tabs .new { width: 33px; z-index: 1; padding-left: 10px; }
.hscroll { flex: 503; margin-right: 20px; display: flex; background: linear-gradient(#6d90c2, #84a4d0); }
.hscroll .splitter { width: 7px; background: #fff; border: 2px solid #a8c4ea; border-right-color: #4c6a9c; }
.hscroll button { width: 17px; }
.hscroll .thumb { flex: 414; border: 1px solid #4c6a9c; border-radius: 2px; background: repeating-linear-gradient(90deg, #6d85ad 0 1px, transparent 1px 2px) center / 7px 7px no-repeat, linear-gradient(#f0f5fb, #c9d6ea 50%, #a9bedd 50%, #d5e2f3); }
.hscroll .track { flex: 40; }

/* status bar */
.status { flex: none; height: 22px; display: flex; justify-content: space-between; border-top: 1px solid #fff; background: linear-gradient(#d5e5fa 0, #c6dbf7 30%, #b4cff3 32%, #d6e5f9 100%); }
.ready { width: 55px; padding-left: 7px; line-height: 20px; border-right: 1px solid #9ab8de; }
.zoom { display: flex; align-items: center; padding: 0 5px; border-left: 1px solid #5f87bb; background: linear-gradient(#a8c6f0, #7ba2da 50%, #97b9ea); }
.views { display: flex; height: 18px; border: 1px solid #7d9fcb; border-radius: 2px; margin-right: 8px; }
.views button { width: 18px; background: #c3d8f3; }
.views .on { background: #fdd58a; }
.zoom label { margin-right: 9px; }
#zoom { appearance: none; width: 102px; height: 16px; background: linear-gradient(#44618f, #44618f) center / 100% 1px no-repeat; }
#zoom::-webkit-slider-thumb { appearance: none; width: 10px; height: 13px; background: #e8f0fc; border: 1px solid #44618f; border-radius: 1px 1px 5px 5px; }

/* taskbar */
.taskbar { flex: none; height: 30px; display: flex; align-items: center; color: #fff; background: linear-gradient(#2d3033 0, #75797d 7%, #4a4d50 45%, #08090a 50%, #000 100%); }
.quick { display: flex; width: 163px; padding-left: 65px; gap: 7px; align-items: center; }
.chev { font-size: 16px; line-height: 14px; margin: -12px 0 0 10px; font-weight: bold; }
.tasks { display: flex; gap: 3px; }
.tasks button { width: 153px; height: 27px; justify-content: flex-start; padding-left: 7px; gap: 4px; font-size: 12px; border: 1px solid #191b1d; border-radius: 3px; box-shadow: inset 0 0 0 1px #77797c; background: linear-gradient(#97999c, #55585a 48%, #08090b 50%, #0c0f12); white-space: nowrap; }
.tasks .pressed { background: linear-gradient(#2c2e30, #1a1b1c 48%, #000 50%); box-shadow: inset 0 0 0 1px #333; }
.tray { margin-left: auto; padding-right: 13px; display: flex; align-items: center; gap: 4px; }
.lang { margin-right: 11px; }
.hidden-icons { margin-right: 3px; }
.net { margin-left: 6px; }
.tray time { margin-left: 2px; }
.start { position: absolute; left: 8px; bottom: 0; }
```
